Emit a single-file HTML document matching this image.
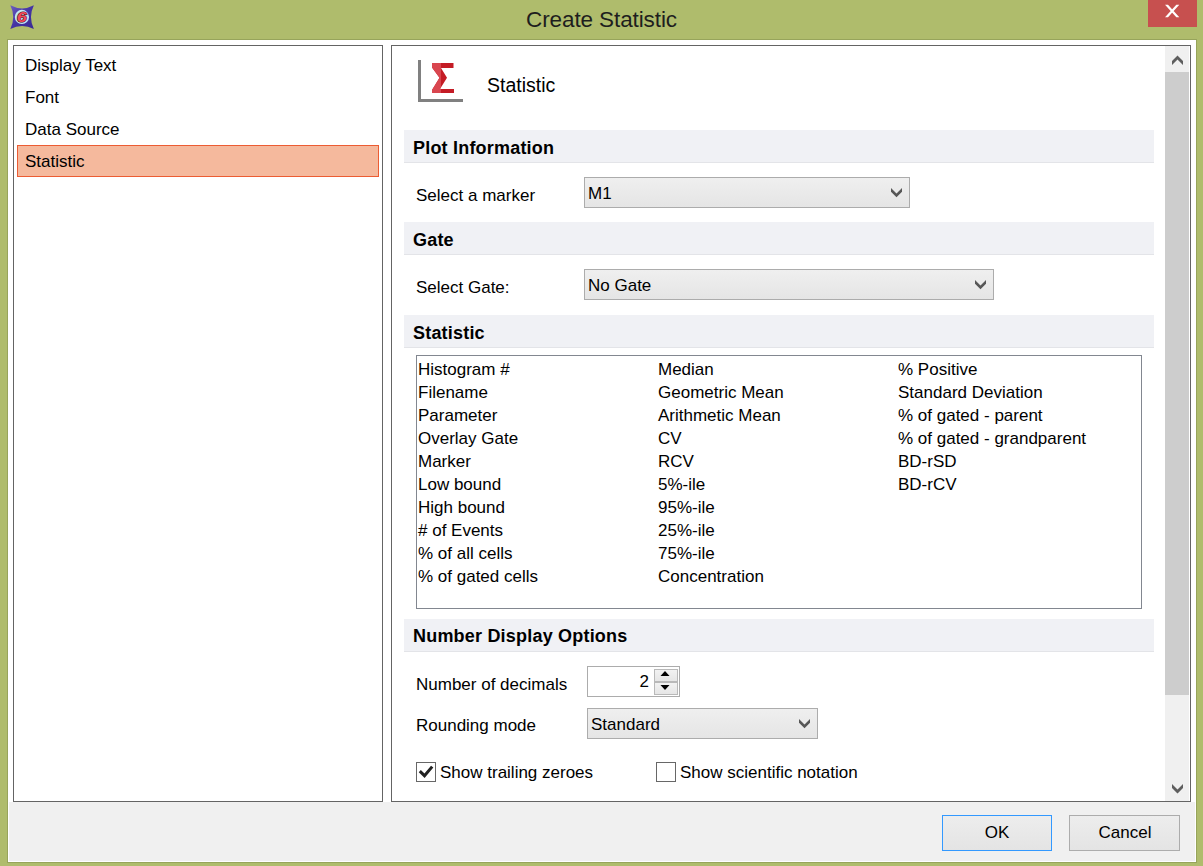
<!DOCTYPE html>
<html><head><meta charset="utf-8">
<style>
html,body{margin:0;padding:0;}
body{width:1203px;height:866px;position:relative;overflow:hidden;background:#afbc6c;font-family:"Liberation Sans",sans-serif;color:#000;}
.a{position:absolute;}
.t{position:absolute;white-space:nowrap;font-size:17px;line-height:20px;height:20px;}
.b{font-weight:bold;font-size:18px;letter-spacing:0.2px;}
.hdr{position:absolute;left:404px;width:750px;height:32px;background:#f0f1f5;border-bottom:1px solid #e3e4e8;}
.dd{position:absolute;box-sizing:border-box;border:1px solid #acacac;background:linear-gradient(#efefef,#e5e5e5);}
.chev{position:absolute;width:12px;height:8px;}
</style></head>
<body>
<!-- app icon -->
<svg class="a" style="left:8px;top:3px" width="28" height="28" viewBox="8 3 28 28">
  <defs><linearGradient id="ig" x1="0" y1="0" x2="1" y2="1"><stop offset="0" stop-color="#6d5fc0"/><stop offset="0.5" stop-color="#4434a4"/><stop offset="1" stop-color="#3a2a92"/></linearGradient></defs>
  <path d="M10.3 5.3 Q22.1 11.5 33.9 5.3 Q28 17.1 33.9 28.9 Q22.1 23 10.3 28.9 Q16.2 17.1 10.3 5.3Z" fill="url(#ig)"/>
  <circle cx="21.9" cy="16.9" r="7.1" fill="#c4e9f6"/>
  <circle cx="21.9" cy="16.9" r="6" fill="#b8e0f0"/>
  <g transform="translate(21.7 22.3) scale(1.2 1)"><text x="0" y="0" text-anchor="middle" font-family="Liberation Sans" font-weight="bold" font-style="italic" font-size="15" fill="#f24a5c" stroke="#4a0810" stroke-width="1" paint-order="stroke">6</text></g>
</svg>
<div class="t" style="left:0;width:1203px;text-align:center;top:10px;font-size:22.5px;letter-spacing:-0.1px;color:#1e1e1e">Create Statistic</div>
<!-- close -->
<div class="a" style="left:1148px;top:0;width:49px;height:27px;background:#c7504f"></div>
<svg class="a" style="left:1160px;top:0" width="24" height="24" viewBox="1160 0 24 24"><path d="M1165 4.8 L1168 4.8 L1179.3 17.2 L1176.3 17.2Z M1176.3 4.8 L1179.3 4.8 L1168 17.2 L1165 17.2Z" fill="#fff"/></svg>

<!-- client -->
<div class="a" style="left:7px;top:39px;width:1188px;height:822px;border:1px solid #97a45b;background:#fff"></div>
<div class="a" style="left:9px;top:802px;width:1186px;height:59px;background:#f0f0f0"></div>

<!-- left panel -->
<div class="a" style="left:13px;top:45px;width:368px;height:755px;border:1px solid #646464;background:#fff"></div>
<div class="a" style="left:17px;top:145px;width:360px;height:30px;border:1px solid #ec5c33;background:#f5b99d"></div>
<div class="t" style="left:25px;top:56px">Display Text</div>
<div class="t" style="left:25px;top:88px">Font</div>
<div class="t" style="left:25px;top:120px">Data Source</div>
<div class="t" style="left:25px;top:152px">Statistic</div>

<!-- right panel -->
<div class="a" style="left:391px;top:45px;width:798px;height:755px;border:1px solid #646464;background:#fff"></div>
<!-- scrollbar -->
<div class="a" style="left:1165px;top:46px;width:24px;height:755px;background:#f0f0f0"></div>
<div class="a" style="left:1165px;top:72px;width:24px;height:623px;background:#cdcdcd"></div>
<svg class="a" style="left:0;top:0" width="1203" height="866" viewBox="0 0 1203 866"><path d="M1172 61 L1177.5 55.5 L1183 61 L1183 65 L1177.5 59.5 L1172 65Z" fill="#5e5e5e"/><path d="M1172 784 L1177.5 789.5 L1183 784 L1183 788 L1177.5 793.5 L1172 788Z" fill="#5e5e5e"/></svg>


<!-- sigma icon -->
<svg class="a" style="left:418px;top:60px" width="46" height="42" viewBox="0 0 46 42">
  <rect x="0" y="0" width="3" height="42" fill="#808080"/>
  <rect x="0" y="39" width="45" height="3" fill="#808080"/>
  <path d="M14 3 H35.5 V8 H23 L29 17.7 L22 29 H36 V33 H14 V30 L21.5 17.7 L14 7.5Z" fill="#c41c25"/>
  <clipPath id="sl"><rect x="0" y="0" width="23" height="42"/></clipPath><path clip-path="url(#sl)" d="M14 3 H35.5 V8 H23 L29 17.7 L22 29 H36 V33 H14 V30 L21.5 17.7 L14 7.5Z" fill="#d9464f"/>
</svg>
<div class="t" style="left:487px;top:75px;font-size:19.5px">Statistic</div>

<!-- Plot Information -->
<div class="hdr" style="top:130px"></div>
<div class="t b" style="left:413px;top:138px">Plot Information</div>
<div class="t" style="left:416px;top:186px">Select a marker</div>
<div class="dd" style="left:584px;top:177px;width:326px;height:31px"></div>
<div class="t" style="left:588px;top:184px">M1</div>

<!-- Gate -->
<div class="hdr" style="top:222px"></div>
<div class="t b" style="left:413px;top:230px">Gate</div>
<div class="t" style="left:416px;top:278px">Select Gate:</div>
<div class="dd" style="left:584px;top:269px;width:410px;height:31px"></div>
<div class="t" style="left:588px;top:276px">No Gate</div>

<!-- Statistic -->
<div class="hdr" style="top:315px"></div>
<div class="t b" style="left:413px;top:323px">Statistic</div>
<div class="a" style="left:416px;top:355px;width:724px;height:252px;border:1px solid #828790;background:#fff"></div>

<div class="t" style="left:418px;top:360px">Histogram #</div>
<div class="t" style="left:418px;top:383px">Filename</div>
<div class="t" style="left:418px;top:406px">Parameter</div>
<div class="t" style="left:418px;top:429px">Overlay Gate</div>
<div class="t" style="left:418px;top:452px">Marker</div>
<div class="t" style="left:418px;top:475px">Low bound</div>
<div class="t" style="left:418px;top:498px">High bound</div>
<div class="t" style="left:418px;top:521px"># of Events</div>
<div class="t" style="left:418px;top:544px">% of all cells</div>
<div class="t" style="left:418px;top:567px">% of gated cells</div>
<div class="t" style="left:658px;top:360px">Median</div>
<div class="t" style="left:658px;top:383px">Geometric Mean</div>
<div class="t" style="left:658px;top:406px">Arithmetic Mean</div>
<div class="t" style="left:658px;top:429px">CV</div>
<div class="t" style="left:658px;top:452px">RCV</div>
<div class="t" style="left:658px;top:475px">5%-ile</div>
<div class="t" style="left:658px;top:498px">95%-ile</div>
<div class="t" style="left:658px;top:521px">25%-ile</div>
<div class="t" style="left:658px;top:544px">75%-ile</div>
<div class="t" style="left:658px;top:567px">Concentration</div>
<div class="t" style="left:898px;top:360px">% Positive</div>
<div class="t" style="left:898px;top:383px">Standard Deviation</div>
<div class="t" style="left:898px;top:406px">% of gated - parent</div>
<div class="t" style="left:898px;top:429px">% of gated - grandparent</div>
<div class="t" style="left:898px;top:452px">BD-rSD</div>
<div class="t" style="left:898px;top:475px">BD-rCV</div>

<!-- Number Display Options -->
<div class="hdr" style="top:619px"></div>
<div class="t b" style="left:413px;top:626px">Number Display Options</div>
<div class="t" style="left:416px;top:675px">Number of decimals</div>
<div class="a" style="left:587px;top:666px;width:91px;height:29px;border:1px solid #acacac;background:#fff"></div>
<div class="t" style="left:635px;top:672px;width:14px;text-align:right">2</div>
<div class="a" style="left:654px;top:669px;width:22px;height:11px;border:1px solid #b9b9b9;background:linear-gradient(#f2f2f2,#e6e6e6)"></div>
<div class="a" style="left:654px;top:682px;width:22px;height:11px;border:1px solid #b9b9b9;background:linear-gradient(#f2f2f2,#e6e6e6)"></div>
<svg class="a" style="left:660px;top:670px" width="10" height="7" viewBox="0 0 10 7"><path d="M0.5 6 L5 1 L9.5 6Z" fill="#000"/></svg>
<svg class="a" style="left:660px;top:684px" width="10" height="7" viewBox="0 0 10 7"><path d="M0.5 1 L5 6 L9.5 1Z" fill="#000"/></svg>

<div class="t" style="left:416px;top:716px">Rounding mode</div>
<div class="dd" style="left:587px;top:708px;width:231px;height:31px"></div>
<div class="t" style="left:591px;top:715px">Standard</div>

<div class="a" style="left:416px;top:762px;width:18px;height:18px;border:1px solid #676767;background:#fff"></div>
<svg class="a" style="left:416px;top:762px" width="20" height="20" viewBox="0 0 20 20"><path d="M3.8 9.2 L8.5 13.7 L16.2 4.6" stroke="#222" stroke-width="3" fill="none"/></svg>
<div class="t" style="left:440px;top:763px">Show trailing zeroes</div>
<div class="a" style="left:656px;top:762px;width:18px;height:18px;border:1px solid #676767;background:#fff"></div>
<div class="t" style="left:680px;top:763px">Show scientific notation</div>

<svg class="a" style="left:0;top:0" width="1203" height="866" viewBox="0 0 1203 866"><path d="M891 188 L896.5 193.5 L902 188 L902 191.7 L896.5 197.2 L891 191.7Z M975 280 L980.5 285.5 L986 280 L986 283.7 L980.5 289.2 L975 283.7Z M799 719 L804.5 724.5 L810 719 L810 722.7 L804.5 728.2 L799 722.7Z" fill="#575757"/></svg>
<!-- buttons -->
<div class="a" style="left:942px;top:815px;width:108px;height:34px;border:1px solid #3399ff;background:linear-gradient(#ededed,#e4e4e4)"></div>
<div class="t" style="left:942px;width:110px;text-align:center;top:823px">OK</div>
<div class="a" style="left:1069px;top:815px;width:109px;height:34px;border:1px solid #acacac;background:linear-gradient(#ededed,#e4e4e4)"></div>
<div class="t" style="left:1069px;width:112px;text-align:center;top:823px">Cancel</div>


</body></html>
